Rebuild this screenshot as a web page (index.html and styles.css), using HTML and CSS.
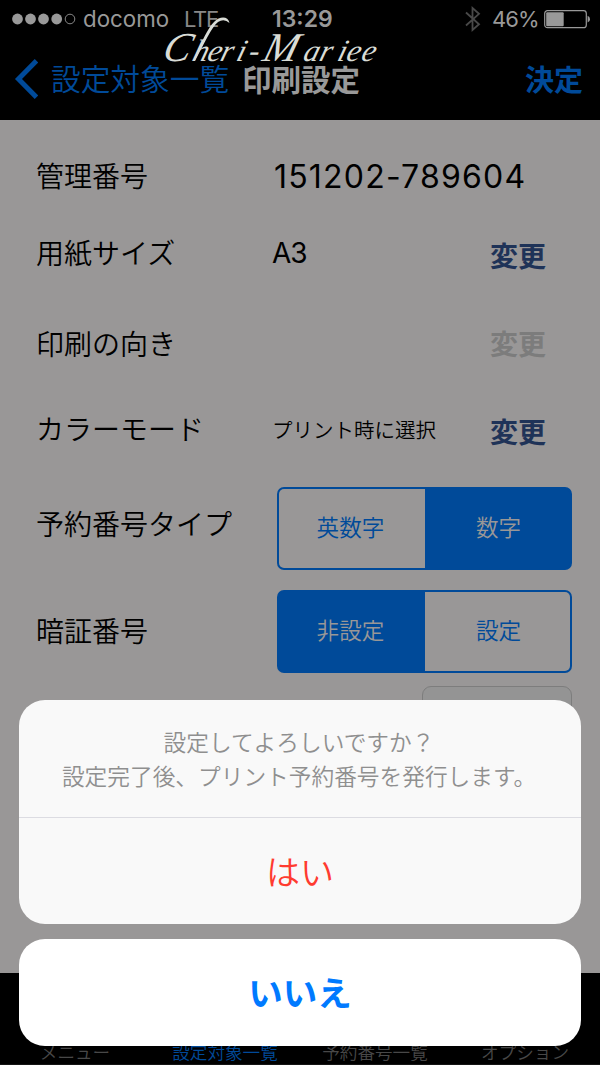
FILE: index.html
```html
<!DOCTYPE html>
<html lang="ja">
<head>
<meta charset="utf-8">
<title>印刷設定</title>
<link rel="stylesheet" href="styles.css">
</head>
<body>
<div class="phone">
  <header class="top">
    <div class="status">
      <svg class="signal" width="64" height="12" viewBox="0 0 64 12"><g fill="#999"><circle cx="5.5" cy="6" r="5.4"/><circle cx="18.5" cy="6" r="5.4"/><circle cx="31.5" cy="6" r="5.4"/><circle cx="44.7" cy="6" r="5.4"/></g><circle cx="58" cy="6" r="4.8" fill="none" stroke="#888" stroke-width="1"/></svg>
      <span class="carrier">docomo</span>
      <span class="network">LTE</span>
      <span class="clock">13:29</span>
      <svg class="bluetooth" width="16" height="26" viewBox="0 0 16 26"><path d="M1 6.5L14 18.3L7.5 24V2L14 7.8L1 19.5" fill="none" stroke="#494949" stroke-width="1.8"/></svg>
      <span class="percent">46%</span>
      <svg class="battery" width="47" height="19" viewBox="0 0 47 19"><rect x=".7" y=".7" width="41.6" height="17" rx="2.8" fill="none" stroke="#999" stroke-width="1.2"/><rect x="2.2" y="2.2" width="17.5" height="14" rx="1" fill="#999"/><path d="M43.6 5.8Q46 6.5 46 9.2T43.6 12.6Z" fill="#999"/></svg>
    </div>
    <nav class="nav">
      <svg class="chevron" width="24" height="40" viewBox="0 0 24 40"><path d="M22.5 1.8L4.5 20L22.5 38.2" fill="none" stroke="#004a99" stroke-width="5"/></svg>
      <span class="back">設定対象一覧</span>
      <h1 class="title">印刷設定</h1>
      <span class="done">決定</span>
    </nav>
    <svg class="signature" width="230" height="60" viewBox="0 0 230 60"><text class="script" transform="translate(0 50) skewX(-16)" x="3 33 48 61 77 89 103 144 160 178 187 202" y="0"><tspan class="cap">C</tspan>heri-<tspan class="cap">M</tspan>ariee</text><path d="M35 50C44 30 50 17 56 11C62 5 70 5 71.500 12Q66 7 60 11C53 17 47 31 37 50Z" fill="#d9dcd6"/></svg>
  </header>

  <main class="settings">
    <div class="row number-row"><span class="label">管理番号</span><span class="value number">151202-789604</span></div>
    <div class="row size-row"><span class="label">用紙サイズ</span><span class="value size">A3</span><span class="change">変更</span></div>
    <div class="row direction-row"><span class="label">印刷の向き</span><span class="value"></span><span class="change disabled">変更</span></div>
    <div class="row color-row"><span class="label">カラーモード</span><span class="value mode">プリント時に選択</span><span class="change">変更</span></div>
    <div class="row type-row"><span class="label">予約番号タイプ</span><div class="segments"><span class="segment">英数字</span><span class="segment selected">数字</span></div></div>
    <div class="row pin-row"><span class="label">暗証番号</span><div class="segments"><span class="segment selected">非設定</span><span class="segment">設定</span></div></div>
    <div class="field"></div>
  </main>

  <footer class="tabs"><span class="tab">メニュー</span><span class="tab active">設定対象一覧</span><span class="tab">予約番号一覧</span><span class="tab">オプション</span></footer>

  <div class="sheet">
    <section class="dialog">
      <p class="message">設定してよろしいですか？<br>設定完了後、プリント予約番号を発行します。</p>
      <div class="confirm">はい</div>
    </section>
    <div class="cancel">いいえ</div>
  </div>
</div>
</body>
</html>
```
FILE: styles.css
```css
* { box-sizing: border-box; }
body { margin: 0; font-family: "Noto Sans CJK JP", sans-serif; font-weight: 350; background: #000; }
.phone { position: relative; width: 600px; height: 1065px; overflow: hidden; display: flex; flex-direction: column; background: #000; }
.top { position: relative; flex: none; height: 120px; }
.status { display: flex; align-items: center; height: 38px; padding-left: 12px; color: #999; font: 400 23px/38px Inter, sans-serif; white-space: nowrap; }
.status svg { flex: none; }
.carrier { width: 101px; margin-left: 7px; font-size: 22.3px; }
.network { width: 88px; color: #888; font-size: 22px; letter-spacing: -1.3px; }
.clock { width: 193px; font-weight: 600; }
.percent { width: 52px; margin-left: 11px; font-size: 22px; letter-spacing: -.9px; }
.nav { display: flex; align-items: center; height: 82px; padding: 0 0 2px 14px; font-size: 29.7px; line-height: 40px; white-space: nowrap; }
.back { width: 191px; margin-left: 13px; color: #004a99; }
.title { width: 283px; margin: 0; font-size: 29.5px; font-weight: 700; color: #999; }
.done { font-weight: 700; font-size: 29px; color: #004a99; }
.chevron { position: relative; top: 1px; }
.signature { position: absolute; left: 158px; top: 11px; overflow: visible; }
.script { font: italic 31px "Liberation Serif", serif; fill: #d9dcd6; }
.cap { font-size: 41px; }

.settings { flex: none; height: 853px; padding: 17px 28px 0 36px; background: #999797; color: #000; }
.row { display: flex; align-items: center; white-space: nowrap; }
.label { width: 238px; padding-bottom: 3px; font-size: 28px; line-height: 40px; }
.value { width: 216px; font-size: 28px; }
.number-row { height: 78px; }
.size-row { height: 76px; }
.direction-row { height: 106px; }
.color-row { height: 64px; }
.number { font-family: Inter, sans-serif; font-weight: 400; font-size: 32px; letter-spacing: 1.2px; }
.size { font-family: Inter, sans-serif; font-weight: 400; margin-left: -2px; margin-right: 2px; letter-spacing: -1px; }
.mode { font-size: 20.5px; margin-left: -2px; margin-right: 2px; padding-bottom: 1px; }
.change { padding-top: 3px; font-size: 28px; font-weight: 700; line-height: 40px; color: #1f3358; }
.change.disabled { padding: 0 0 3px; color: #7c7c7c; }
.type-row { height: 83px; margin-top: 26px; }
.type-row .label { padding-bottom: 12px; }
.pin-row { height: 83px; margin-top: 20px; }
.segments { display: flex; width: 295px; height: 83px; margin-left: 3px; border-radius: 7px; background: #004a99; padding: 2px; }
.segment { flex: 1; display: flex; align-items: center; justify-content: center; padding-bottom: 4px; font-size: 22.6px; color: #004a99; background: #999797; }
.segment:first-child { border-radius: 5px 0 0 5px; padding-right: 3px; }
.segment:last-child { border-radius: 0 5px 5px 0; padding-left: 2px; }
.segment.selected { background: #004a99; color: #999797; }
.field { width: 150px; height: 84px; margin: 13px 0 0 386px; border: 1px solid #7d7d7d; border-radius: 9px; background: #949494; }

.tabs { display: grid; grid-template-columns: repeat(4, 1fr); flex: 1; align-items: end; padding-bottom: 0; font-size: 17.6px; line-height: 24px; text-align: center; color: #484848; border-bottom: 1px solid #151515; }
.tab.active { color: #004a99; }

.sheet { position: absolute; left: 19px; right: 19px; top: 700px; display: flex; flex-direction: column; gap: 15px; }
.dialog { height: 224px; border-radius: 26px; background: #f9f9f9; overflow: hidden; }
.message { height: 118px; margin: 0; padding: 25px 2px 0 0; border-bottom: 1px solid #dcdce2; font-size: 22.7px; line-height: 34px; text-align: center; color: #8f8f8f; white-space: nowrap; }
.confirm { height: 106px; font-size: 34px; line-height: 105px; text-align: center; color: #ff3b30; }
.cancel { height: 107px; border-radius: 26px; background: #fff; font-size: 34.5px; line-height: 105px; font-weight: 700; text-align: center; color: #007aff; }
```
